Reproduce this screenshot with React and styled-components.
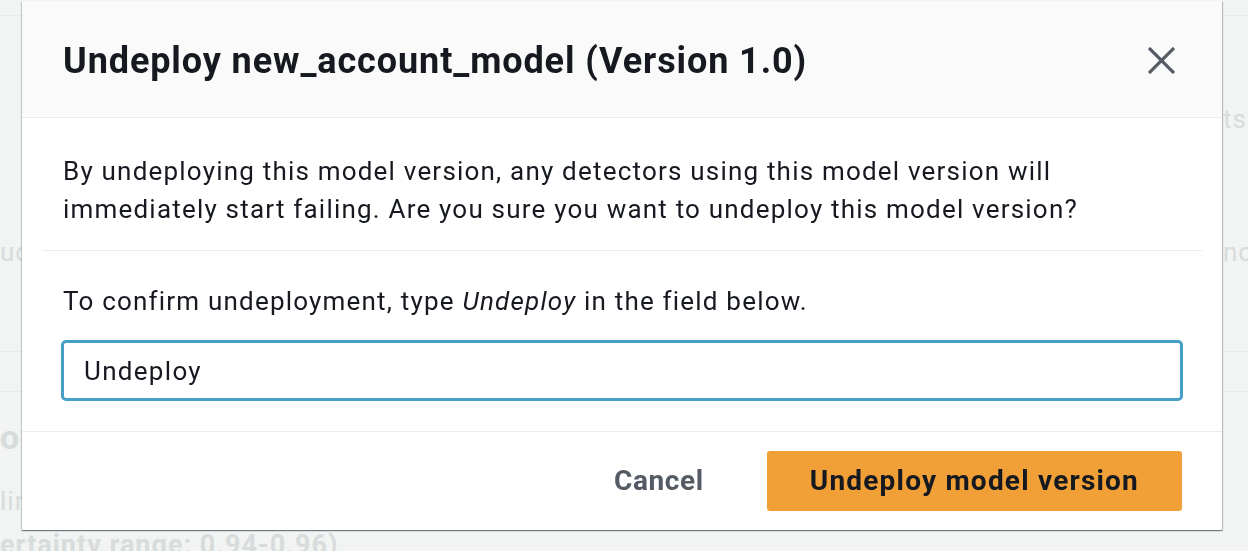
import React from 'react'
import styled, { createGlobalStyle } from 'styled-components'

const GlobalStyle = createGlobalStyle`
  html, body {
    margin: 0;
    padding: 0;
    background: #f2f3f3;
    font-family: Roboto, "Liberation Sans", Arial, sans-serif;
    color: #16191f;
  }
  * { box-sizing: border-box; }
`

// faded page behind the modal
const Backdrop = styled.div`
  width: 100vw;
  height: 100vh;
  overflow: hidden;
  background: #f2f3f3;
  color: #d8dcdc;
  font-size: 26px;
  letter-spacing: 1px;
`

const TopBar = styled.div`
  height: 16px;
  border-bottom: 1px solid #e8eaea;
`

const BgRow = styled.div`
  display: grid;
  grid-template-columns: 1223px 1fr;
  height: ${p => p.h}px;
  align-items: center;
  white-space: nowrap;
  overflow: hidden;
  font-weight: ${p => (p.bold ? 700 : 400)};
  font-size: ${p => p.size || 26}px;
  border-bottom: ${p => (p.line ? '1px solid #e8eaea' : 'none')};
`

const Overlay = styled.div`
  position: fixed;
  inset: 0;
  display: flex;
  justify-content: center;
  align-items: flex-start;
  padding: 1px 4px 0 0;
`

const Modal = styled.div`
  width: 1200px;
  background: #fff;
  box-shadow: 0 1px 1px 0 rgba(0, 28, 36, 0.35), 1px 1px 1px 0 rgba(0, 28, 36, 0.2),
    -1px 1px 1px 0 rgba(0, 28, 36, 0.15);
`

const Header = styled.div`
  height: 117px;
  display: flex;
  align-items: center;
  justify-content: space-between;
  padding: 3px 47px 0 41px;
  background: #fafafa;
  border-bottom: 1px solid #eaeded;
`

const Title = styled.h2`
  margin: 0;
  font-size: 36px;
  font-weight: 700;
  letter-spacing: 0.9px;
  color: #16191f;
`

const CloseButton = styled.button`
  border: 0;
  background: none;
  padding: 0;
  width: 27px;
  height: 27px;
  display: flex;
  cursor: pointer;
`

const Body = styled.div`
  padding: 34px 20px 30px;
`

const Section = styled.div`
  padding: 0 21px;
  font-size: 26px;
  line-height: 38px;
  letter-spacing: 1.2px;
  color: #16191f;
`

const Divider = styled.hr`
  border: 0;
  border-top: 1px solid #eaeded;
  margin: 22px 0 31px;
`

const Input = styled.input`
  display: block;
  width: calc(100% + 4px);
  margin: 20px -2px 0;
  height: 61px;
  padding: 0 20px;
  border: 3px solid #479fc6;
  border-radius: 5px;
  font-family: inherit;
  font-size: 26px;
  letter-spacing: 1.3px;
  color: #16191f;
  outline: none;
`

const Footer = styled.div`
  border-top: 1px solid #eaeded;
  height: 99px;
  display: flex;
  align-items: center;
  justify-content: flex-end;
  gap: 43px;
  padding: 0 40px 1px;
`

const Button = styled.button`
  height: 60px;
  padding: 0 ${p => (p.primary ? 43 : 20)}px;
  border: 0;
  border-radius: 3px;
  background: ${p => (p.primary ? '#f1a037' : 'transparent')};
  color: ${p => (p.primary ? '#16191f' : '#545b64')};
  font-family: inherit;
  font-size: 28px;
  font-weight: 700;
  letter-spacing: ${p => (p.primary ? 1.2 : 0.6)}px;
  cursor: pointer;
`

const CloseIcon = () => (
  <svg width="27" height="27" viewBox="0 0 27 27">
    <path d="M1 1 L26 26 M26 1 L1 26" stroke="#545b64" strokeWidth="3.2" fill="none" />
  </svg>
)

export default function App() {
  return (
    <>
      <GlobalStyle />
      <Backdrop>
        <TopBar />
        <BgRow h={206}>
          <span />
          <span>ts</span>
        </BgRow>
        <BgRow h={60}>
          <span>uct</span>
          <span>no</span>
        </BgRow>
        <BgRow h={70} line />
        <BgRow h={40} line />
        <BgRow h={90} bold size={34}>
          <span>or</span>
        </BgRow>
        <BgRow h={38}>
          <span>line</span>
        </BgRow>
        <BgRow h={50} bold size={27}>
          <span>ertainty range: 0.94-0.96)</span>
        </BgRow>
      </Backdrop>
      <Overlay>
        <Modal role="dialog">
          <Header>
            <Title>Undeploy new_account_model (Version 1.0)</Title>
            <CloseButton aria-label="Close">
              <CloseIcon />
            </CloseButton>
          </Header>
          <Body>
            <Section>
              By undeploying this model version, any detectors using this model version will
              <br />
              immediately start failing. Are you sure you want to undeploy this model version?
            </Section>
            <Divider />
            <Section>
              To confirm undeployment, type <em>Undeploy</em> in the field below.
              <Input defaultValue="Undeploy" />
            </Section>
          </Body>
          <Footer>
            <Button>Cancel</Button>
            <Button primary>Undeploy model version</Button>
          </Footer>
        </Modal>
      </Overlay>
    </>
  )
}
